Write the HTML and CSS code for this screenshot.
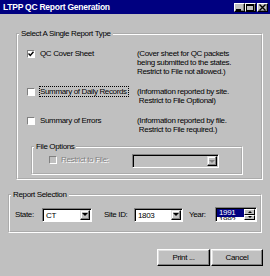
FILE: index.html
```html
<!DOCTYPE html>
<html>
  <head>
    <link rel="stylesheet" href="styles.css">
    <title>LTPP QC Report Generation</title>
  </head>
  <body>
    <div class="window">
      <div class="titlebar">
        <span class="title">LTPP QC Report Generation</span>
        <div class="title-buttons">
          <span class="tbtn"><svg width="9" height="7"><rect x="1" y="5" width="5" height="2" fill="#000"/></svg></span>
          <span class="tbtn"><svg width="9" height="7"><rect x="0.5" y="0.5" width="7" height="6" fill="none" stroke="#000"/><rect x="0" y="0" width="8" height="2" fill="#000"/></svg></span>
          <span class="tbtn close-btn"><svg width="9" height="7"><path d="M1.5 0.5 L7.5 6.5 M7.5 0.5 L1.5 6.5" stroke="#000" stroke-width="1.4"/></svg></span>
        </div>
      </div>

      <div class="dialog">
        <fieldset class="group report-type">
          <legend>Select A Single Report Type</legend>
          <div class="type-list">
            <label class="check"><span class="box"><svg width="6" height="6"><path d="M0.5 2.5 L2.3 4.5 L5.5 0.8" fill="none" stroke="#000" stroke-width="1.4"/></svg></span><span>QC Cover Sheet</span></label>
            <p class="desc">(Cover sheet for QC packets<br>being submitted to the states.<br>Restrict to File not allowed.)</p>

            <label class="check"><span class="box"></span><span class="focused">Summary of Daily Records</span></label>
            <p class="desc">(Information reported by site.<br>&nbsp;Restrict to File Optional)</p>

            <label class="check"><span class="box"></span><span>Summary of Errors</span></label>
            <p class="desc">(Information reported by file.<br>&nbsp;Restrict to File required.)</p>
          </div>

          <fieldset class="group file-options">
            <legend>File Options</legend>
            <div class="file-row">
              <label class="check file-check disabled"><span class="box"></span><span>Restrict to File:</span></label>
              <div class="combo combo-file disabled">
                <span class="combo-value"></span>
                <span class="combo-arrow"><i class="tri-down"></i></span>
              </div>
            </div>
          </fieldset>
        </fieldset>

        <fieldset class="group report-selection">
          <legend>Report Selection</legend>
          <div class="selection-row">
            <span class="field-label state-label">State:</span>
            <div class="combo combo-state">
              <span class="combo-value">CT</span>
              <span class="combo-arrow"><i class="tri-down"></i></span>
            </div>
            <span class="field-label site-label">Site ID:</span>
            <div class="combo combo-site">
              <span class="combo-value">1803</span>
              <span class="combo-arrow"><i class="tri-down"></i></span>
            </div>
            <span class="field-label year-label">Year:</span>
            <div class="spin">
              <div class="spin-list">
                <div class="spin-item selected">1991</div>
                <div class="spin-item">1992</div>
              </div>
              <div class="spin-buttons">
                <span class="spin-btn"><i class="tri-up small"></i></span>
                <span class="spin-btn"><i class="tri-down small"></i></span>
              </div>
            </div>
          </div>
        </fieldset>

        <div class="actions">
          <button class="push print-button">Print ...</button>
          <button class="push cancel-button">Cancel</button>
        </div>
      </div>
    </div>
  </body>
</html>
```

FILE: styles.css
```css
body {
  margin: 0;
  font-family: "Liberation Sans", Arial, sans-serif;
  font-size: 8px;
  line-height: 9px;
  letter-spacing: -0.35px;
  color: #000;
  background-color: #c0c0c0;
}

.window {
  width: 270px;
  height: 276px;
  background-color: #c0c0c0;
  overflow: hidden;
}

/* title bar */

.titlebar {
  height: 14px;
  background-color: #000080;
  display: flex;
  align-items: center;
  justify-content: space-between;
  padding: 0 2px 0 3px;
}

.title {
  color: white;
  font-weight: bold;
  font-size: 8.5px;
  letter-spacing: -0.25px;
  line-height: 10px;
}

.title-buttons {
  display: flex;
}

.tbtn {
  width: 11px;
  height: 9px;
  box-sizing: border-box;
  background-color: #c0c0c0;
  border: 1px solid;
  border-color: #fff #000 #000 #fff;
  box-shadow: inset -1px -1px #808080;
  display: flex;
  align-items: center;
  justify-content: center;
}

.tbtn svg {
  display: block;
}

.close-btn {
  margin-left: 1px;
}

/* dialog */

.dialog {
  padding: 15px 7px 0 8px;
}

.group {
  margin: 0;
  padding: 0;
  min-width: 0;
  border: 2px groove #fff;
}

.group legend {
  padding: 0 2px;
  margin-left: 1px;
  line-height: 10px;
}

.report-type {
  margin-left: 8px;
}

.type-list {
  display: grid;
  grid-template-columns: 110px auto;
  row-gap: 11px;
  padding: 10px 0 0 9px;
}

.check {
  display: flex;
  align-items: center;
  gap: 5px;
  align-self: start;
  height: 9px;
  white-space: nowrap;
}

.box {
  width: 8px;
  height: 8px;
  box-sizing: border-box;
  background-color: #fff;
  border: 1px solid;
  border-color: #808080 #fff #fff #808080;
  display: flex;
  align-items: center;
  justify-content: center;
  flex-shrink: 0;
}

.box svg {
  display: block;
}

.focused {
  outline: 1px dotted #000;
  padding-right: 1px;
}

.desc {
  margin: 0;
  white-space: nowrap;
}

.file-options {
  margin: 8px 18px 3px 13px;
}

.file-row {
  display: flex;
  align-items: flex-start;
  padding: 2px 0 5px 16px;
}

.file-check {
  width: 83px;
  gap: 4px;
  margin-top: 1px;
}

.disabled {
  color: #808080;
  text-shadow: 1px 1px #fff;
}

.disabled .box {
  background-color: #c0c0c0;
}

/* combo boxes */

.combo {
  display: flex;
  height: 14px;
  box-sizing: border-box;
  padding: 1px;
  background-color: #fff;
  border: 1px solid;
  border-color: #808080 #fff #fff #808080;
  box-shadow: inset 1px 1px #000;
}

.combo.disabled {
  background-color: #c0c0c0;
  text-shadow: none;
}

.combo-value {
  flex: 1;
  padding: 1px 0 0 2px;
  line-height: 9px;
}

.combo-arrow {
  width: 10px;
  height: 10px;
  box-sizing: border-box;
  background-color: #c0c0c0;
  border: 1px solid;
  border-color: #dfdfdf #000 #000 #dfdfdf;
  box-shadow: inset -1px -1px #808080, inset 1px 1px #fff;
  display: flex;
  align-items: center;
  justify-content: center;
}

.tri-down,
.tri-up {
  width: 0;
  height: 0;
  border-left: 3px solid transparent;
  border-right: 3px solid transparent;
}

.tri-down {
  border-top: 3px solid #000;
}

.tri-up {
  border-bottom: 3px solid #000;
}

.tri-down.small,
.tri-up.small {
  border-left-width: 2px;
  border-right-width: 2px;
  border-top-width: 2px;
  border-bottom-width: 2px;
}

.tri-down.small {
  border-bottom: none;
}

.tri-up.small {
  border-top: none;
}

.disabled .tri-down {
  border-top-color: #808080;
}

.combo-file {
  width: 87px;
}

/* report selection */

.report-selection {
  margin: 10px 1px 0 0;
}

.selection-row {
  display: flex;
  align-items: center;
  padding: 7px 0 9px 5px;
  height: 15px;
}

.state-label {
  width: 27px;
}

.combo-state {
  width: 50px;
}

.site-label {
  width: 30px;
  margin-left: 12px;
}

.combo-site {
  width: 49px;
}

.year-label {
  width: 26px;
  margin-left: 6px;
}

.spin {
  display: flex;
  width: 42px;
  height: 15px;
  box-sizing: border-box;
  padding: 1px;
  background-color: #fff;
  border: 1px solid;
  border-color: #808080 #fff #fff #808080;
  box-shadow: inset 1px 1px #000;
}

.spin-list {
  flex: 1;
  height: 11px;
  overflow: hidden;
}

.spin-item {
  height: 8px;
  line-height: 8px;
  padding-left: 2px;
  overflow: hidden;
}

.spin-item.selected {
  background-color: #000080;
  color: #fff;
}

.spin-item + .spin-item {
  height: 3px;
  line-height: 6px;
}

.spin-buttons {
  width: 11px;
  display: flex;
  flex-direction: column;
}

.spin-btn {
  flex: 1;
  background-color: #c0c0c0;
  border: 1px solid;
  border-color: #fff #000 #000 #fff;
  box-sizing: border-box;
  display: flex;
  align-items: center;
  justify-content: center;
}

/* buttons */

.actions {
  display: flex;
  justify-content: flex-end;
  gap: 1px;
  margin-top: 16px;
}

.push {
  height: 17px;
  padding: 0;
  font-family: inherit;
  font-size: 8px;
  letter-spacing: -0.35px;
  color: #000;
  background-color: #c0c0c0;
  border: 1px solid;
  border-color: #fff #000 #000 #fff;
  box-shadow: inset -1px -1px #808080, inset 1px 1px #dfdfdf;
  border-radius: 0;
}

.print-button {
  width: 53px;
}

.cancel-button {
  width: 52px;
}
```
